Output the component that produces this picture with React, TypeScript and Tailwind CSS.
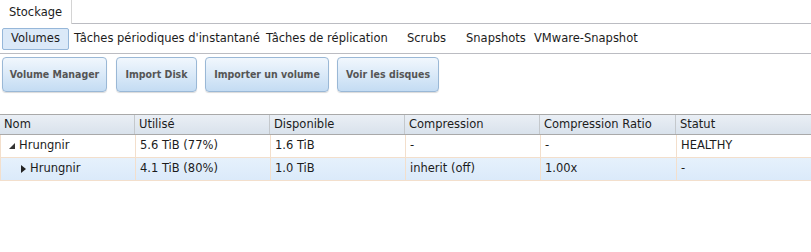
import React from "react";

const font = { fontFamily: '"DejaVu Sans", Verdana, sans-serif' };
const btnFont = { fontFamily: '"DejaVu Sans Condensed", "DejaVu Sans", Verdana, sans-serif' };

function Btn({ label, w, ml }: { label: string; w: string; ml: string }) {
  return (
    <div
      className={`h-[35px] ${w} ${ml} flex items-center justify-center whitespace-nowrap rounded-[4px] border border-[#9ab8d6] bg-gradient-to-b from-[#f1f7fd] to-[#c4dcf3] text-[10.5px] font-bold text-[#555] shadow-[0_1px_1px_rgba(0,0,0,0.15)]`}
      style={btnFont}
    >
      {label}
    </div>
  );
}

const cols = ["w-[135px]", "w-[135px]", "w-[135px]", "w-[135px]", "w-[136px]", "flex-1"];

export default function App() {
  const header = ["Nom", "Utilisé", "Disponible", "Compression", "Compression Ratio", "Statut"];
  return (
    <div className="w-[811px] h-[252px] bg-white text-[#1c1c1c] text-[11.5px]" style={font}>
      {/* tab bar */}
      <div className="flex h-[24px]">
        <div className="w-[72px] h-[24px] border-r border-[#d4d4d4] bg-white pl-[9px] pt-[4px]">Stockage</div>
        <div className="flex-1 border-b border-[#bbbcc2]" />
      </div>
      {/* sub nav */}
      <div className="flex items-center h-[30px] border-b border-[#bbbcc2] pl-[2px] whitespace-nowrap">
        <div className="h-[22px] w-[67px] flex items-center justify-center rounded-[2px] border border-[#96b7d9] bg-[#dbe9f8]">
          Volumes
        </div>
        <div className="ml-[5px] w-[192px]">Tâches périodiques d'instantané</div>
        <div className="w-[141px]">Tâches de réplication</div>
        <div className="w-[59px]">Scrubs</div>
        <div className="w-[68px]">Snapshots</div>
        <div>VMware-Snapshot</div>
      </div>
      {/* buttons */}
      <div className="flex pt-[3px] pl-[2px]">
        <Btn label="Volume Manager" w="w-[105px]" ml="ml-0" />
        <Btn label="Import Disk" w="w-[81px]" ml="ml-[9px]" />
        <Btn label="Importer un volume" w="w-[124px]" ml="ml-[8px]" />
        <Btn label="Voir les disques" w="w-[102px]" ml="ml-[8px]" />
      </div>
      {/* table */}
      <div className="mt-[22px] border-t border-[#a9a9a9] whitespace-nowrap">
        <div className="flex h-[20px] border-b border-[#a9a9a9] bg-gradient-to-b from-[#eaeff5] to-[#d9e2ec]">
          {header.map((h, i) => (
            <div key={h} className={`${cols[i]} ${i < 5 ? "border-r border-[#c4c8cc]" : ""} pl-[4px] leading-[19px]`}>
              {h}
            </div>
          ))}
        </div>
        <div className="flex h-[23px] border-b border-l border-[#f3dfcc] bg-white">
          {[
            <span className="flex items-center">
              <svg width="6" height="6" viewBox="0 0 6 6" className="ml-[4px] mr-[4px]">
                <polygon points="6,0 6,6 0,6" fill="#333" />
              </svg>
              Hrungnir
            </span>,
            "5.6 TiB (77%)",
            "1.6 TiB",
            "-",
            "-",
            "HEALTHY",
          ].map((c, i) => (
            <div key={i} className={`${cols[i]} ${i < 5 ? "border-r border-[#f3dfcc]" : ""} pl-[4px] flex items-center`}>
              {c}
            </div>
          ))}
        </div>
        <div className="flex h-[23px] border-b border-l border-[#f3dfcc] bg-gradient-to-b from-[#e6f1fc] to-[#dbeafa]">
          {[
            <span className="flex items-center">
              <svg width="5" height="8" viewBox="0 0 5 8" className="ml-[16px] mr-[4px]">
                <polygon points="0,0 5,4 0,8" fill="#222" />
              </svg>
              Hrungnir
            </span>,
            "4.1 TiB (80%)",
            "1.0 TiB",
            "inherit (off)",
            "1.00x",
            "-",
          ].map((c, i) => (
            <div key={i} className={`${cols[i]} ${i < 5 ? "border-r border-[#f3dfcc]" : ""} pl-[4px] flex items-center`}>
              {c}
            </div>
          ))}
        </div>
      </div>
    </div>
  );
}
